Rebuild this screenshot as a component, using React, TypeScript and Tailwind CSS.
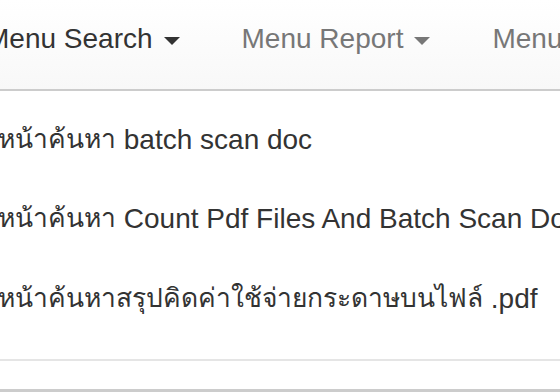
const menus = [
  { label: 'Menu Search', active: true, caret: true },
  { label: 'Menu Report', active: false, caret: true },
  { label: 'Menu Setting', active: false, caret: false },
]

// Thai runs are set a little smaller than the Latin runs, as in the original page
const items: [string, string][] = [
  ['หน้าค้นหา', ' batch scan doc'],
  ['หน้าค้นหา', ' Count Pdf Files And Batch Scan Doc'],
  ['หน้าค้นหาสรุปคิดค่าใช้จ่ายกระดาษบนไฟล์', ' .pdf'],
]

function Caret({ active }: { active: boolean }) {
  return (
    <span
      className={`ml-[11px] mt-[4px] inline-block h-0 w-0 border-x-[8px] border-t-[8px] border-x-transparent ${
        active ? 'border-t-[#333333]' : 'border-t-[#777777]'
      }`}
    />
  )
}

export default function App() {
  return (
    <div
      className="w-[560px] h-[392px] overflow-hidden bg-white text-[28px]"
      style={{ fontFamily: '"Liberation Sans", "Noto Sans", sans-serif' }}
    >
      {/* Navbar */}
      <nav className="h-[91px] border-b-2 border-[#cccccc] bg-gradient-to-b from-white to-[#f8f8f8] pt-[23px]">
        <ul className="flex items-start -ml-[45px] whitespace-nowrap leading-[32px]">
          {menus.map((m) => (
            <li
              key={m.label}
              className={`flex items-center px-[31px] ${m.active ? 'text-[#333333]' : 'text-[#777777]'}`}
            >
              <span>{m.label}</span>
              {m.caret && <Caret active={m.active} />}
            </li>
          ))}
        </ul>
      </nav>

      {/* Dropdown */}
      <ul className="pt-[9px] -ml-[2px] whitespace-nowrap text-[#333333]">
        {items.map(([th, en]) => (
          <li key={th + en} className="h-[79.5px] flex items-center">
            <span className="text-[26.4px]">{th}</span>
            <span className="whitespace-pre">{en}</span>
          </li>
        ))}
        <li className="mt-[20px] h-[2px] bg-[#e5e5e5]" />
        <li className="mt-[28px] h-[3px] bg-[#cccccc]" />
      </ul>
    </div>
  )
}
